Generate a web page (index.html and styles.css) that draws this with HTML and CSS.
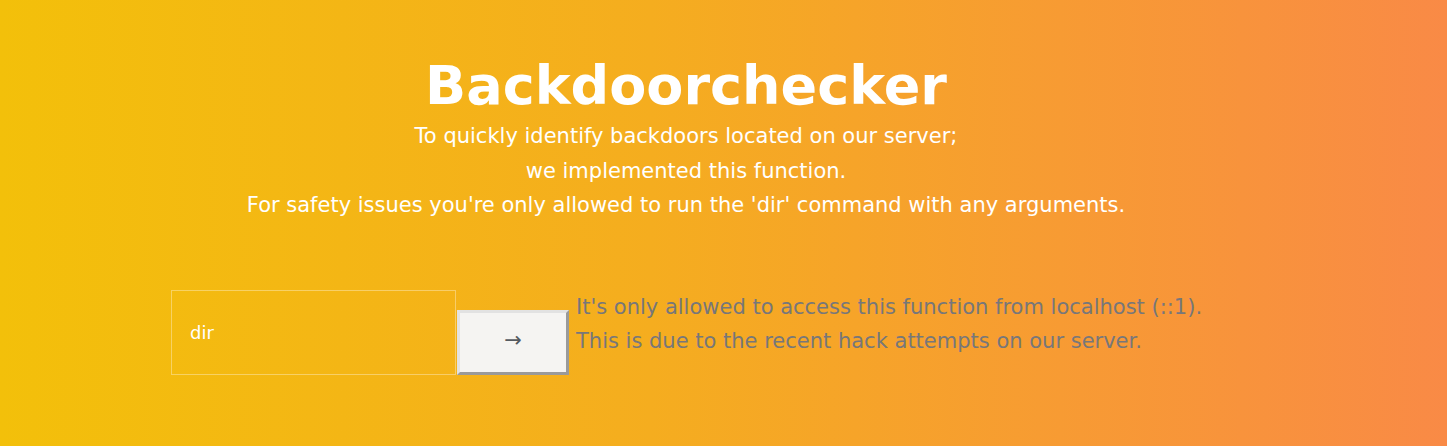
FILE: index.html
```html
<!DOCTYPE html>
<html lang="en">
<head>
<meta charset="utf-8">
<title>Backdoorchecker</title>
<link rel="stylesheet" href="styles.css">
</head>
<body>
<div class="page">
  <div class="container">
    <header class="intro">
      <h1 class="title">Backdoorchecker</h1>
      <p class="lead">To quickly identify backdoors located on our server;<br>we implemented this function.<br>For safety issues you're only allowed to run the 'dir' command with any arguments.</p>
    </header>
    <form class="checker">
      <input class="cmd" type="text" value="dir">
      <button class="go" type="button">&rarr;</button>
      <div class="notice">
        <p>It's only allowed to access this function from localhost (::1).</p>
        <p>This is due to the recent hack attempts on our server.</p>
      </div>
    </form>
  </div>
</div>
</body>
</html>
```

FILE: styles.css
```css
html, body {
  margin: 0;
  padding: 0;
  height: 100%;
}
body {
  font-family: "DejaVu Sans", sans-serif;
  background: linear-gradient(to right, #f3c00a 0%, #f5ad1f 45%, #f98a46 100%);
  overflow: hidden;
}
.page {
  height: 446px;
}
.container {
  width: 1030px;
  margin-left: 171px;
  padding-top: 52px;
}
.intro {
  text-align: center;
  color: #fff;
}
.title {
  margin: 0;
  font-size: 54px;
  line-height: 67px;
  font-weight: bold;
}
.lead {
  margin: 0;
  font-size: 21px;
  line-height: 34.5px;
}
.checker {
  display: flex;
  align-items: flex-end;
  margin-top: 67px;
}
.cmd {
  flex: none;
  box-sizing: border-box;
  width: 285px;
  height: 85px;
  margin: 0;
  padding: 0 0 0 18px;
  border: 1px solid rgba(255, 255, 255, 0.35);
  background: transparent;
  color: #fff;
  font-family: "DejaVu Sans", sans-serif;
  font-size: 18px;
  outline: none;
}
.go {
  flex: none;
  box-sizing: border-box;
  width: 112px;
  height: 65px;
  margin: 0 0 0 1px;
  padding: 0 0 3px;
  background: #f5f4f2;
  border-style: solid;
  border-width: 3px;
  border-color: #e2e2e2 #9a9a9a #9a9a9a #e2e2e2;
  color: #555a60;
  font-family: "DejaVu Sans", sans-serif;
  font-size: 21px;
  line-height: 1;
}
.notice {
  flex: none;
  align-self: flex-start;
  margin-left: 7px;
  color: #77777a;
  font-size: 21px;
  line-height: 34px;
  white-space: nowrap;
}
.notice p {
  margin: 0;
}
```
